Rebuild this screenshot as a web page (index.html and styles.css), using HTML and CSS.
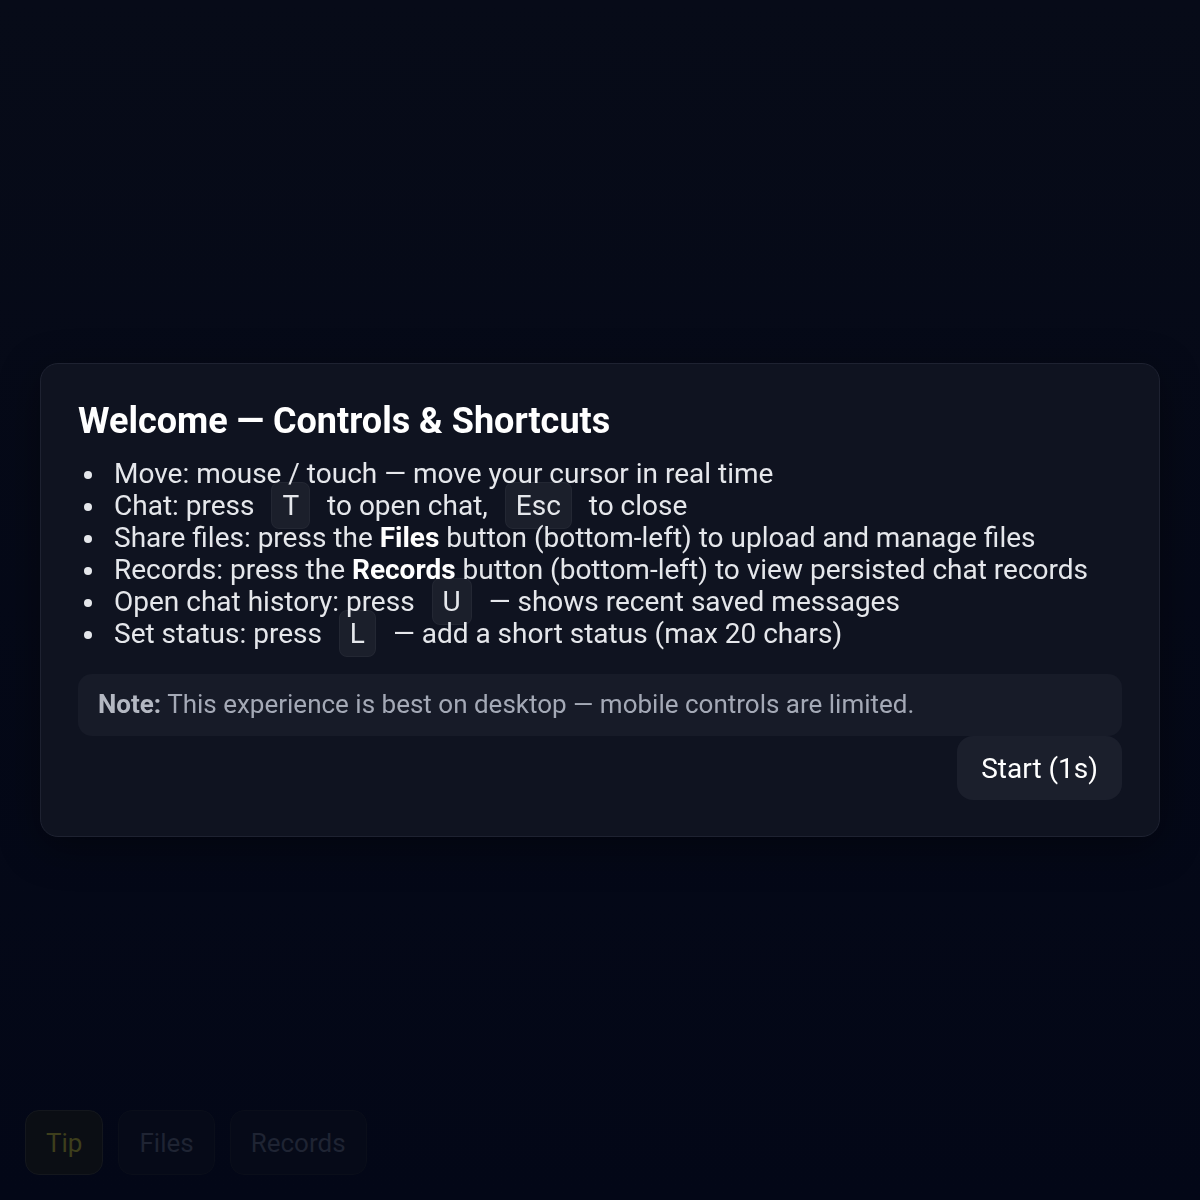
FILE: index.html
```html
<!DOCTYPE html>
<html lang="en">
  <head>
    <meta charset="UTF-8" />
    <meta name="viewport" content="width=device-width, initial-scale=1.0" />
    <title>Welcome</title>
    <link rel="stylesheet" href="styles.css">
  </head>
  <body>
    <div class="app">
      <!-- Bottom-left toolbar -->
      <div class="toolbar">
        <button class="tool-btn tip">Tip</button>
        <button class="tool-btn">Files</button>
        <button class="tool-btn">Records</button>
      </div>
    </div>

    <!-- Welcome modal -->
    <div class="overlay">
      <div class="modal">
        <h2>Welcome — Controls &amp; Shortcuts</h2>
        <ul class="shortcut-list">
          <li>Move: mouse / touch — move your cursor in real time</li>
          <li>Chat: press <kbd>T</kbd> to open chat, <kbd>Esc</kbd> to close</li>
          <li>Share files: press the <strong>Files</strong> button (bottom-left) to upload and manage files</li>
          <li>Records: press the <strong>Records</strong> button (bottom-left) to view persisted chat records</li>
          <li>Open chat history: press <kbd>U</kbd> — shows recent saved messages</li>
          <li>Set status: press <kbd>L</kbd> — add a short status (max 20 chars)</li>
        </ul>
        <div class="note">
          <strong>Note:</strong> This experience is best on desktop — mobile controls are limited.
        </div>
        <div class="modal-actions">
          <button class="start-button">Start (1s)</button>
        </div>
      </div>
    </div>
  </body>
</html>
```

FILE: styles.css
```css
* {
  margin: 0;
  padding: 0;
  box-sizing: border-box;
}

body {
  font-family: Roboto, "Liberation Sans", sans-serif;
  background: linear-gradient(180deg, #070b18 0%, #030717 100%);
  height: 100vh;
  overflow: hidden;
  color: #e5e7eb;
}

.app {
  height: 100vh;
  display: flex;
  flex-direction: column;
  justify-content: flex-end;
  padding: 25px;
}

/* Toolbar */
.toolbar {
  display: flex;
  gap: 15px;
}

.tool-btn {
  font-family: inherit;
  font-size: 26px;
  height: 65px;
  padding: 0 20px;
  border-radius: 14px;
  border: 1px solid #0a0e1a;
  background: #060a18;
  color: #1f2433;
}

.tool-btn.tip {
  background: #0b0e14;
  border-color: #14171d;
  color: #3d3e1c;
}

/* Modal */
.overlay {
  position: fixed;
  inset: 0;
  display: flex;
  align-items: center;
  justify-content: center;
  padding: 40px;
}

.modal {
  width: 100%;
  background: #0f1320;
  border: 1px solid #1e2231;
  border-radius: 18px;
  padding: 36px 37px;
  box-shadow: 0 10px 40px rgba(0, 0, 0, 0.4);
}

.modal h2 {
  font-size: 36px;
  font-weight: 700;
  color: #ffffff;
  line-height: 42px;
  margin-bottom: 16px;
}

.shortcut-list {
  list-style: none;
  padding-left: 36px;
  font-size: 28px;
  line-height: 32px;
  color: #e5e7eb;
  margin-bottom: 24px;
}

.shortcut-list li {
  position: relative;
}

.shortcut-list li::before {
  content: "";
  position: absolute;
  left: -30px;
  top: 13px;
  width: 8px;
  height: 8px;
  border-radius: 50%;
  background: #e5e7eb;
}

.shortcut-list strong {
  color: #ffffff;
}

kbd {
  font-family: inherit;
  font-size: 28px;
  padding: 6px 10px;
  margin: 0 10px;
  background: rgba(255, 255, 255, 0.05);
  border: 1px solid rgba(255, 255, 255, 0.04);
  border-radius: 8px;
  color: #e5e7eb;
}

.note {
  background: #171b28;
  border-radius: 14px;
  padding: 15px 20px 16px;
  font-size: 26px;
  line-height: 31px;
  color: #a4a9b6;
}

.note strong {
  color: #b4b8c2;
}

.modal-actions {
  display: flex;
  justify-content: flex-end;
}

.start-button {
  font-family: inherit;
  font-size: 28px;
  height: 64px;
  padding: 0 24px;
  border: none;
  border-radius: 16px;
  background: #1b1f2c;
  color: #ffffff;
  cursor: pointer;
}
```
